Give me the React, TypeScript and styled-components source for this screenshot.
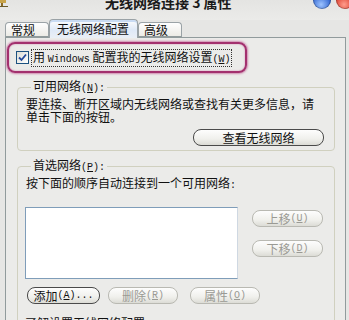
import React from 'react';
import styled, { createGlobalStyle } from 'styled-components';

const cjk = `"Noto Sans CJK SC", "Noto Sans", sans-serif`;
const mono = `"Liberation Mono", "DejaVu Sans Mono", monospace`;

const Global = createGlobalStyle`
  html, body { margin: 0; padding: 0; }
  body {
    width: 349px; height: 320px; overflow: hidden;
    background: #e6e6e4; color: #111;
    font-family: ${cjk}; font-size: 12px;
  }
`;

const Window = styled.div`
  width: 349px; height: 320px; overflow: hidden;
  display: flex; flex-direction: column;
`;

const TitleBar = styled.div`
  height: 20px; flex: none;
  display: flex; align-items: flex-start;
  background: linear-gradient(#e4e4e2, #ebebe9);
`;

const AppIcon = styled.svg`
  flex: none; margin-top: -2px;
`;

const Title = styled.div`
  margin: -5px 0 0 97px;
  font-size: 14px; font-weight: bold; line-height: 15px;
  color: #1a1a1a; white-space: nowrap;
`;

const Orbs = styled.div`
  margin: -9px -5px 0 auto; display: flex; gap: 5px;
`;

const Orb = styled.div<{ $c1: string; $c2: string }>`
  width: 18px; height: 18px; border-radius: 50%;
  background: radial-gradient(circle at 45% 75%, ${p => p.$c1} 0%, ${p => p.$c2} 70%);
  box-shadow: inset 0 0 0 1px rgba(0,0,0,.25);
`;

const TabStrip = styled.div`
  height: 17px; flex: none; margin-left: 5px;
  display: flex; align-items: flex-end; position: relative; z-index: 1;
`;

const Tab = styled.div<{ $w: number; $active?: boolean }>`
  width: ${p => p.$w}px; box-sizing: border-box;
  height: ${p => (p.$active ? 19 : 15)}px;
  margin-bottom: ${p => (p.$active ? -1 : 0)}px;
  border: 1px solid #9aa2a6; border-bottom: ${p => (p.$active ? 'none' : '1px solid #919b9c')};
  border-radius: 4px 4px 0 0;
  background: ${p => (p.$active
    ? 'linear-gradient(#fdfdfd, #dfe9f7 55%, #eaeff6)'
    : 'linear-gradient(#fefefe, #ecebe6)')};
  ${p => p.$active ? 'box-shadow: inset 0 2px 0 #c9dbf3;' : ''}
  padding-left: ${p => (p.$active ? 7 : 5)}px;
  line-height: ${p => (p.$active ? 17 : 14)}px; font-size: 12px;
  white-space: nowrap;
`;

const Panel = styled.div`
  flex: 1; margin: 0 3px 0 5px;
  border: 1px solid #919b9c;
  background: #ebebe9;
  padding: 4px 10px 0 11px;
`;

const Highlight = styled.div`
  margin-left: -10px; width: 240px; height: 31px; box-sizing: border-box;
  border: 2px solid #a3306e; border-radius: 8px;
  box-shadow: 0 0 2px 1px #d08ab0, inset 0 0 2px #d08ab0;
  display: flex; align-items: center; padding-left: 7px; gap: 2px;
`;

const Check = styled.div`
  width: 13px; height: 13px; box-sizing: border-box; flex: none;
  border: 1px solid #1c5180;
  background: linear-gradient(135deg, #dcdcd6, #ffffff);
  display: flex; align-items: center; justify-content: center;
`;

const FocusLabel = styled.span`
  border: 1px dotted #333; padding: 0 1px;
  line-height: 13px; white-space: nowrap;
`;

const Latin = styled.span`
  font-family: ${mono}; font-size: 10px;
`;

const Key = styled.u`
  font-family: ${mono}; font-size: 10px;
`;

const Group = styled.fieldset<{ $mt: number; $pt: number }>`
  margin: ${p => p.$mt}px 0 0 0;
  padding: ${p => p.$pt}px 10px 4px 8px;
  border: 1px solid #d0d0bf; border-radius: 4px;
  min-width: 0;
`;

const Legend = styled.legend`
  margin-left: 5px; padding: 0 2px;
  line-height: 14px; font-size: 12px; white-space: nowrap;
`;

const Desc = styled.div`
  line-height: 13px; white-space: nowrap;
`;

const RightRow = styled.div`
  display: flex; justify-content: flex-end; margin-top: 6px;
`;

const Button = styled.div<{ $w: number; $disabled?: boolean }>`
  width: ${p => p.$w}px; height: 17px; box-sizing: border-box;
  border: 1px solid ${p => (p.$disabled ? '#b9b9b2' : '#4a4a4a')};
  border-radius: 8px;
  background: linear-gradient(#fdfdfd, #f0f0ec 60%, #dcdcd6);
  color: ${p => (p.$disabled ? '#9a9a94' : '#111')};
  display: flex; align-items: center; justify-content: center;
  font-size: 12px; line-height: 15px; white-space: nowrap;
`;

const PrefGrid = styled.div`
  display: grid; grid-template-columns: 213px 71px; column-gap: 14px;
  margin-top: 15px; margin-left: -1px;
`;

const ListBox = styled.div`
  height: 72px; box-sizing: border-box;
  border: 1px solid #7f9db9; border-right-color: #cfd8e2; background: #fff;
`;

const SideButtons = styled.div`
  display: flex; flex-direction: column; gap: 13px; padding-top: 3px;
`;

const BottomRow = styled.div`
  display: flex; margin-top: 8px; margin-left: 1px;
`;

const Spacer = styled.div<{ $w: number }>`
  width: ${p => p.$w}px; flex: none;
`;

const LastRow = styled.div`
  display: flex; justify-content: space-between; align-items: flex-start;
  margin-top: 12px; margin-left: -1px;
`;

const LastButtonWrap = styled.div`
  padding-top: 4px;
`;

export default function App() {
  return (
    <>
      <Global />
      <Window>
        <TitleBar>
          <AppIcon width="8" height="9" viewBox="0 0 8 9">
            <rect x="0" y="0" width="6" height="5" fill="#c9a44a" />
            <rect x="1" y="5" width="2" height="3" fill="#8a6a24" />
            <rect x="0" y="8" width="8" height="1" fill="#6b5a2a" />
          </AppIcon>
          <Title>无线网络连接 3 属性</Title>
          <Orbs>
            <Orb $c1="#9cc3ff" $c2="#1f55c8" />
            <Orb $c1="#ff9c8c" $c2="#d42a1a" />
          </Orbs>
        </TitleBar>
        <TabStrip>
          <Tab $w={44}>常规</Tab>
          <Tab $w={89} $active>无线网络配置</Tab>
          <Tab $w={44}>高级</Tab>
        </TabStrip>
        <Panel>
          <Highlight>
            <Check>
              <svg width="9" height="9" viewBox="0 0 9 9">
                <path d="M1 4.5 L3.5 7 L8 1.5" fill="none" stroke="#23489a" strokeWidth="1.8" />
              </svg>
            </Check>
            <FocusLabel>
              用 <Latin>Windows</Latin> 配置我的无线网络设置<Latin>(</Latin><Key>W</Key><Latin>)</Latin>
            </FocusLabel>
          </Highlight>

          <Group $mt={6} $pt={1}>
            <Legend>可用网络<Latin>(</Latin><Key>N</Key><Latin>):</Latin></Legend>
            <Desc>要连接、断开区域内无线网络或查找有关更多信息，请</Desc>
            <Desc>单击下面的按钮。</Desc>
            <RightRow>
              <Button $w={131}>查看无线网络</Button>
            </RightRow>
          </Group>

          <Group $mt={7} $pt={1}>
            <Legend>首选网络<Latin>(</Latin><Key>P</Key><Latin>):</Latin></Legend>
            <Desc>按下面的顺序自动连接到一个可用网络<Latin>:</Latin></Desc>
            <PrefGrid>
              <ListBox />
              <SideButtons>
                <Button $w={71} $disabled>上移<Latin>(</Latin><Key>U</Key><Latin>)</Latin></Button>
                <Button $w={71} $disabled>下移<Latin>(</Latin><Key>D</Key><Latin>)</Latin></Button>
              </SideButtons>
            </PrefGrid>
            <BottomRow>
              <Button $w={73}>添加<Latin>(</Latin><Key>A</Key><Latin>)...</Latin></Button>
              <Spacer $w={8} />
              <Button $w={70} $disabled>删除<Latin>(</Latin><Key>R</Key><Latin>)</Latin></Button>
              <Spacer $w={12} />
              <Button $w={70} $disabled>属性<Latin>(</Latin><Key>O</Key><Latin>)</Latin></Button>
            </BottomRow>
            <LastRow>
              <Desc>了解设置无线网络配置</Desc>
              <LastButtonWrap>
                <Button $w={71}>高级<Latin>(</Latin><Key>V</Key><Latin>)</Latin></Button>
              </LastButtonWrap>
            </LastRow>
          </Group>
        </Panel>
      </Window>
    </>
  );
}
